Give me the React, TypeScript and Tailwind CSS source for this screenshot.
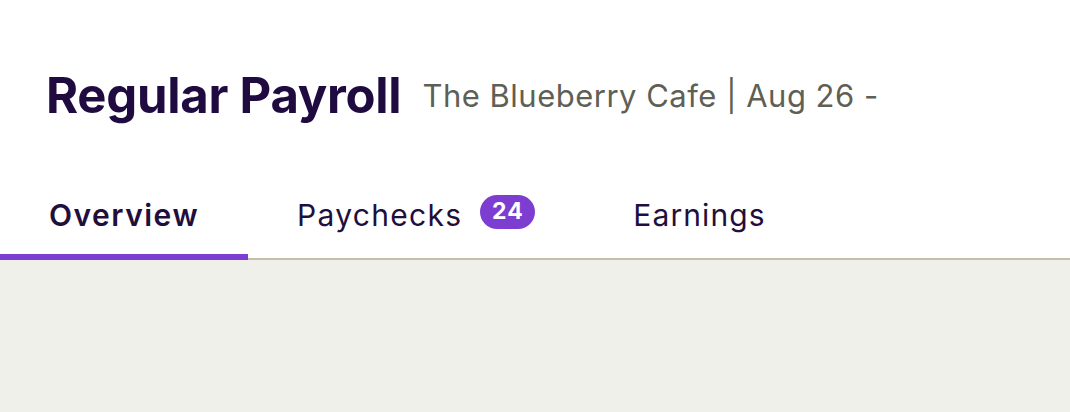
export default function App() {
  return (
    <div className="w-[1070px] h-[412px] flex flex-col bg-white" style={{ fontFamily: "Inter, 'Noto Sans', sans-serif" }}>
      <div className="h-[162px] pl-[46px] pt-[66px]">
        <div className="flex items-center h-[60px]">
          <h1 className="text-[49px] leading-[60px] font-bold text-[#1f0b3f] tracking-[-0.25px]">Regular Payroll</h1>
          <span className="ml-[21px] text-[31px] leading-[38px] text-[#5f5f55] tracking-[0.5px]">The Blueberry Cafe | Aug 26 -</span>
        </div>
      </div>
      <div className="flex border-b-2 border-[#c4c1aa] h-[98px]">
        <div className="w-[248px] flex items-center justify-center border-b-[6px] border-[#7d3dd1] -mb-[2px] pt-[14px]">
          <span className="text-[30px] leading-[36px] font-semibold text-[#1f0f3d] tracking-[1.5px]">Overview</span>
        </div>
        <div className="flex items-center px-[49px] pt-[10px]">
          <span className="text-[30px] leading-[36px] text-[#1f0f3d] tracking-[1.3px]">Paychecks</span>
          <span className="ml-[18px] mb-[7px] h-[34px] w-[55px] rounded-full bg-[#7d3dd1] text-white text-[23px] leading-none font-bold flex items-center justify-center tracking-[1px]">24</span>
        </div>
        <div className="flex items-center px-[49px] pt-[10px]">
          <span className="text-[30px] leading-[36px] text-[#1f0f3d] tracking-[1.1px]">Earnings</span>
        </div>
      </div>
      <div className="flex-1 bg-[#f0f0ea]" />
    </div>
  );
}
